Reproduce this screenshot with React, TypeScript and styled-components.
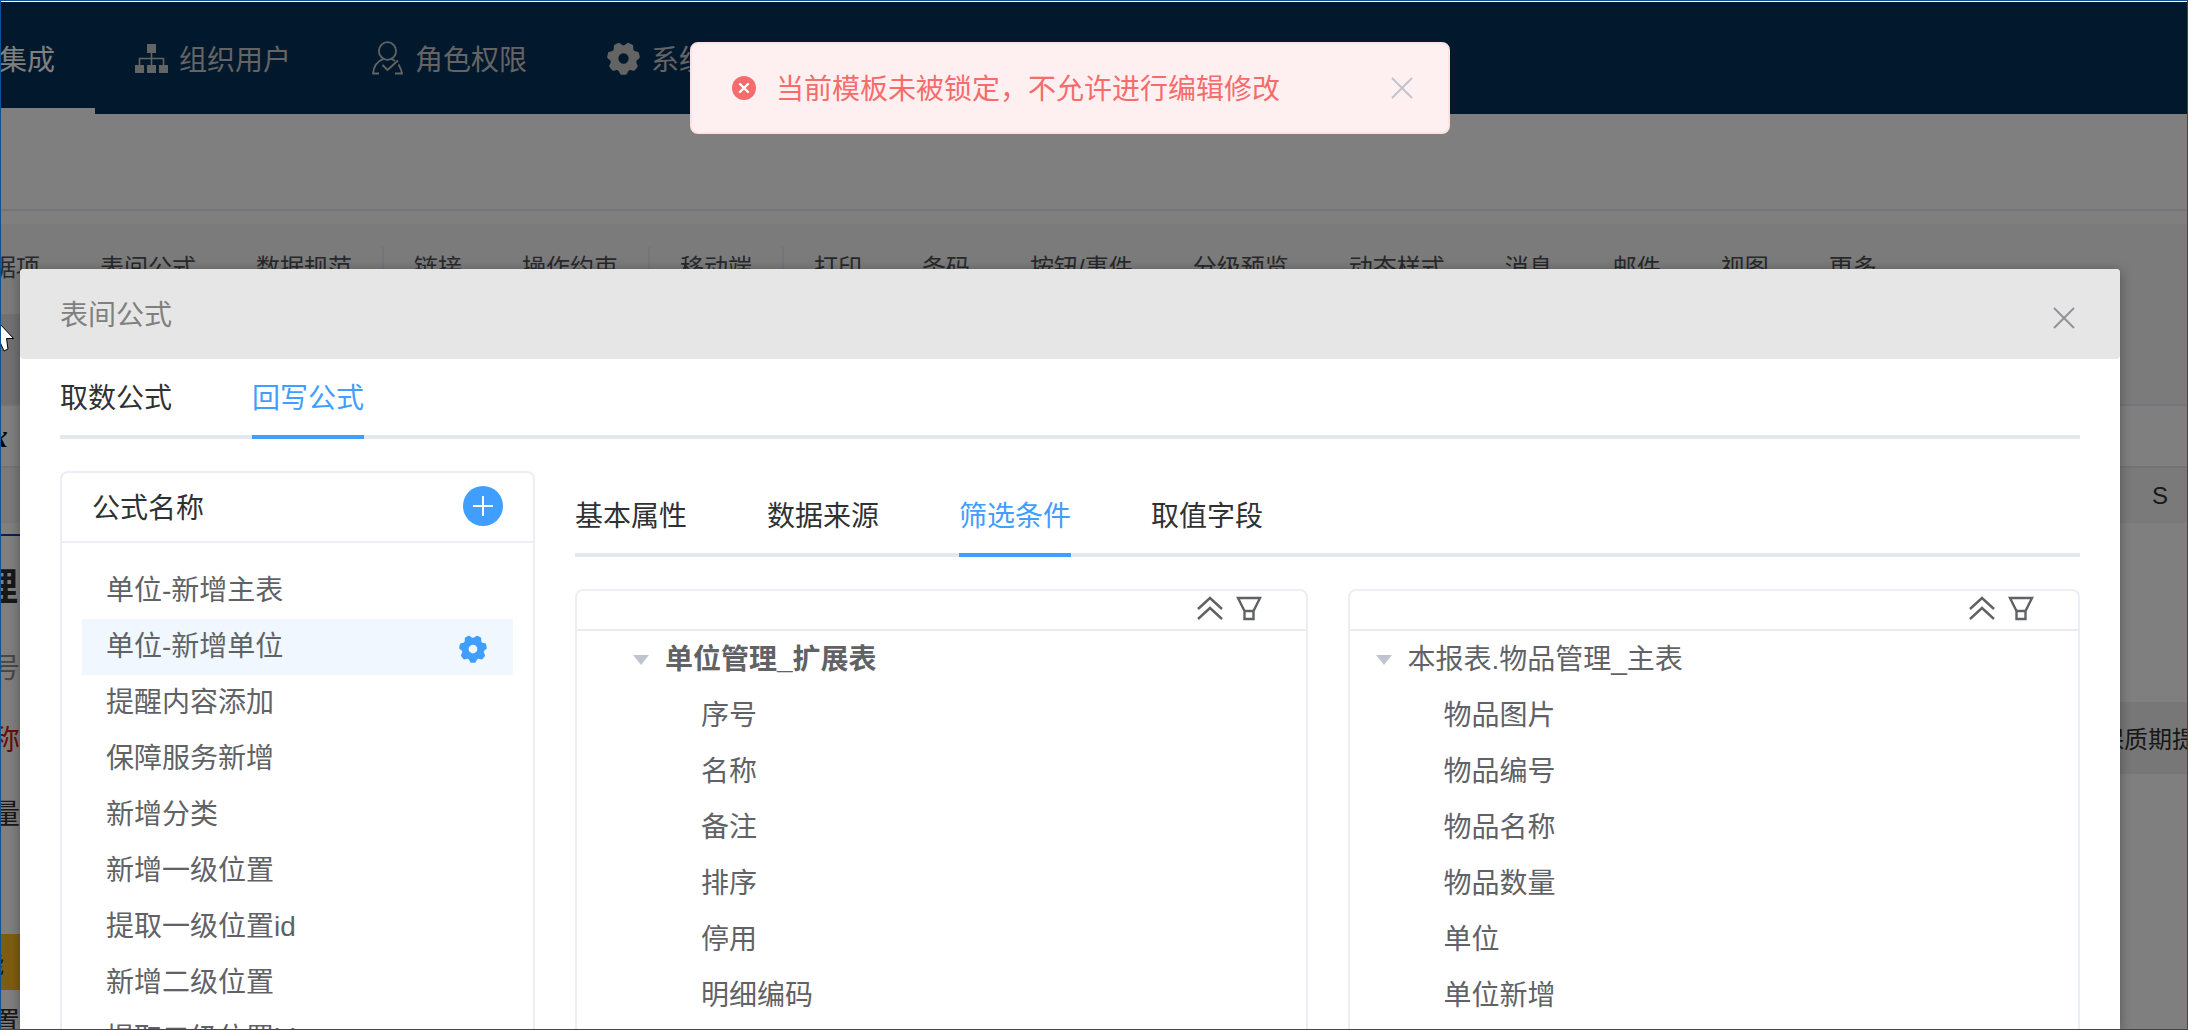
import React, { useState } from "react";
import styled, { createGlobalStyle, css } from "styled-components";

const fontStack = `"Liberation Sans", "Noto Sans CJK SC", sans-serif`;
const blue = "#409eff";
const line = "#ebeef5";

const GlobalStyle = createGlobalStyle`
  * { box-sizing: border-box; }
  body { margin: 0; font-family: ${fontStack}; font-size: 28px; color: #303133; }
  button { font: inherit; color: inherit; background: none; border: 0; padding: 0; cursor: pointer; }
  ul { list-style: none; margin: 0; padding: 0; }
  h2, h3 { margin: 0; font-size: 28px; font-weight: 400; }
  svg { display: block; flex: none; }
`;

const Screen = styled.div`
  position: relative;
  height: 100vh;
  overflow: hidden;
  border: 1px solid #0b5394;
  background: #fff;
`;

/* ---------- page under the dialog ---------- */

const Page = styled.div`
  display: flex;
  flex-direction: column;
`;

const Header = styled.nav`
  display: flex;
  height: 112px;
  margin-top: 1px;
  background: #043058;
`;

const NavItem = styled.button<{ $active?: boolean; $first?: boolean }>`
  display: flex;
  flex: none;
  align-items: center;
  gap: 11px;
  height: 112px;
  padding: 0 40px;
  white-space: nowrap;
  color: #c8c8c8;
  ${(p) =>
    p.$first &&
    css`
      margin-left: -42px;
      color: #fff;
      border-top: 6px solid transparent;
      border-bottom: 6px solid #fff;
    `}
`;

const TitleBar = styled.div`
  height: 97px;
  border-bottom: 2px solid #e8e8f2;
`;

const Toolbar = styled.div`
  display: flex;
  flex-direction: column;
  height: 182px;
  margin-top: 13px;
  background: #f6f6f6;
  border-bottom: 2px solid #e8e8f2;
`;

const ToolList = styled.div`
  display: flex;
  margin: 23px 0 19px -63px;
  font-size: 24px;
`;

const ToolItem = styled.button<{ $divided?: boolean }>`
  flex: none;
  padding: 0 30px;
  height: 48px;
  line-height: 40px;
  padding-bottom: 6px;
  white-space: nowrap;
  color: #505255;
  border-right: ${(p) => (p.$divided ? "2px solid #e8e8f2" : "0")};
`;

const ToolDetail = styled.div`
  width: 160px;
  height: 92px;
  background: #e2e2e9;
`;

const FormulaBar = styled.div`
  height: 62px;
  padding-left: 4px;
  border-bottom: 2px solid #e6e6e6;
  display: flex;
  align-items: center;
`;

const FxMark = styled.span`
  font: italic 700 32px "Liberation Serif", serif;
  color: #111;
  margin-left: -24px;
`;

const Sheet = styled.div`
  display: flex;
  justify-content: space-between;
`;

const SheetEdge = styled.div<{ $width: number }>`
  width: ${(p) => p.$width}px;
  display: flex;
  flex-direction: column;
`;

const SheetCell = styled.div<{ $h: number; $bg?: string; $color?: string; $end?: boolean }>`
  display: flex;
  flex: none;
  align-items: center;
  justify-content: ${(p) => (p.$end ? "flex-end" : "flex-start")};
  height: ${(p) => p.$h}px;
  white-space: nowrap;
  background: ${(p) => p.$bg || "transparent"};
  color: ${(p) => p.$color || "#303133"};
`;

const SheetTitle = styled(SheetCell)`
  margin-top: 11px;
  padding: 0 2px 8px 0;
  border-top: 2px solid #0a4590;
  font-size: 38px;
  font-weight: 700;
`;

const BadgeCell = styled(SheetCell)`
  padding-right: 16px;
  font-size: 24px;
`;

const ColumnLetter = styled(SheetCell)`
  padding-left: 52px;
  font-size: 24px;
`;

const FieldCell = styled(SheetCell)`
  margin-top: 179px;
  padding-bottom: 2px;
  font-size: 24px;
`;

const Mask = styled.div`
  position: absolute;
  inset: 1px 0 0;
  background: rgba(0, 0, 0, 0.5);
`;

const Pointer = styled.svg`
  position: absolute;
  left: 0;
  top: 322px;
`;

/* ---------- message ---------- */

const MessageLayer = styled.div`
  position: absolute;
  inset: 41px 48px auto 0;
  display: flex;
  justify-content: center;
`;

const Message = styled.div`
  display: flex;
  align-items: center;
  width: 760px;
  height: 92px;
  padding: 0 34px 0 40px;
  border: 2px solid #fde2e2;
  border-radius: 8px;
  background: #fef0f0;
  color: #f56c6c;
`;

const MessageText = styled.span`
  flex: 1;
  margin-left: 20px;
  padding-bottom: 2px;
`;

const IconButton = styled.button`
  display: flex;
  color: ${(p) => p.color || "#909399"};
`;

/* ---------- dialog ---------- */

const DialogLayer = styled.div`
  position: absolute;
  inset: 268px 67px 0 19px;
  display: flex;
`;

const Dialog = styled.section`
  display: flex;
  flex: 1;
  flex-direction: column;
  min-width: 0;
  background: #fff;
  border-radius: 4px 4px 0 0;
  box-shadow: 0 2px 12px rgba(0, 0, 0, 0.35);
`;

const DialogHeader = styled.header`
  display: flex;
  align-items: center;
  justify-content: space-between;
  height: 90px;
  padding: 0 44px 0 40px;
  border-radius: 4px;
  background: #e6e6e6;
  color: #808080;

  h2 {
    padding-bottom: 2px;
  }

  button {
    padding-top: 8px;
  }
`;

const DialogBody = styled.div`
  display: flex;
  flex: 1;
  flex-direction: column;
  min-height: 0;
  padding: 0 40px;
`;

const TabBar = styled.div`
  display: flex;
  flex: none;
  gap: 80px;
  height: 80px;
  margin-bottom: 32px;
  box-shadow: inset 0 -4px #e4e7ed;
`;

const Tab = styled.button<{ $active: boolean }>`
  height: 80px;
  padding-top: 4px;
  line-height: 72px;
  border-bottom: 4px solid ${(p) => (p.$active ? blue : "transparent")};
  color: ${(p) => (p.$active ? blue : "#303133")};
`;

const Columns = styled.div`
  display: flex;
  flex: 1;
  gap: 40px;
  min-height: 0;
`;

const Panel = styled.aside`
  flex: 0 0 475px;
  border: 2px solid ${line};
  border-bottom: 0;
  border-radius: 8px 8px 0 0;
  overflow: hidden;
`;

const PanelHeader = styled.div`
  display: flex;
  align-items: center;
  justify-content: space-between;
  height: 70px;
  padding: 0 30px 2px;
  border-bottom: 2px solid ${line};
`;

const AddButton = styled.button`
  display: grid;
  place-items: center;
  width: 40px;
  height: 40px;
  border-radius: 50%;
  background: ${blue};
  color: #fff;
`;

const FormulaList = styled.ul`
  padding: 20px;
`;

const FormulaRow = styled.li<{ $active: boolean }>`
  display: flex;
  align-items: center;
  height: 56px;
  padding: 0 26px 0 24px;
  background: ${(p) => (p.$active ? "#f0f7ff" : "transparent")};
  color: #606266;
`;

const FormulaName = styled.button`
  flex: 1;
  height: 56px;
  line-height: 56px;
  text-align: left;
`;

const SettingsButton = styled(IconButton)`
  padding-top: 4px;
`;

const Main = styled.main`
  display: flex;
  flex: 1;
  flex-direction: column;
  min-width: 0;
  padding-top: 6px;
`;

const Trees = styled.div`
  display: grid;
  flex: 1;
  grid-template-columns: 1fr 1fr;
  gap: 40px;
  min-height: 0;
`;

const TreeCard = styled.div`
  border: 2px solid ${line};
  border-bottom: 0;
  border-radius: 8px 8px 0 0;
  overflow: hidden;
`;

const TreeTools = styled.div`
  display: flex;
  align-items: center;
  justify-content: flex-end;
  gap: 11px;
  height: 40px;
  padding: 0 43px 4px;
  border-bottom: 2px solid #ebebeb;
`;

const TreeList = styled.ul<{ $inset: number }>`
  padding-left: ${(p) => p.$inset}px;
  color: #606266;
`;

const TreeRoot = styled.button<{ $bold?: boolean }>`
  display: flex;
  align-items: center;
  gap: 16px;
  height: 56px;
  padding: 2px 0 0 26px;
  line-height: 54px;
  font-weight: ${(p) => (p.$bold ? 700 : 400)};
`;

const TreeLeaf = styled.li`
  height: 56px;
  padding: 2px 0 0 94px;
  line-height: 54px;
`;

/* ---------- icons ---------- */

const CloseIcon = () => (
  <svg width="24" height="24" viewBox="0 0 24 24" fill="none" stroke="currentColor" strokeWidth="2">
    <path d="M2 2 22 22M22 2 2 22" />
  </svg>
);

const ErrorIcon = () => (
  <svg width="24" height="24" viewBox="0 0 24 24">
    <circle cx="12" cy="12" r="12" fill="#f56c6c" />
    <path d="M8 8 16 16M16 8 8 16" stroke="#fff" strokeWidth="2.4" strokeLinecap="round" />
  </svg>
);

const SitemapIcon = () => (
  <svg width="33" height="33" viewBox="0 0 33 33" fill="currentColor">
    <path d="M12 2h9v9h-9zM0 23h9v8H0zM12 23h9v8h-9zM24 23h9v8h-9z" />
    <path d="M16.5 11v12M4.5 23v-6.500h24V23" fill="none" stroke="currentColor" strokeWidth="1.6" />
  </svg>
);

const RoleIcon = () => (
  <svg width="33" height="34" viewBox="0 0 33 34" fill="none" stroke="currentColor" strokeWidth="1.8">
    <ellipse cx="16.500" cy="10" rx="8.600" ry="8.800" />
    <path d="M12.500 17.800C6.500 20 2.600 25.500 2 32.500h6M20.500 17.800l3.500 2.200M27.500 23.500c1.500 2.500 3 5.500 3.500 9h-7" />
    <path d="M11.500 24l5 5L27 19.500" />
  </svg>
);

const gearShape = (() => {
  const teeth = 7;
  const pts: string[] = [];
  for (let i = 0; i < teeth * 20; i++) {
    const a = (i / (teeth * 20)) * Math.PI * 2 + Math.PI / 2;
    const wave = Math.max(-1, Math.min(1, 1.6 * Math.cos(teeth * (a - Math.PI / 2)) + 0.5));
    const r = 14.3 + 1.5 * wave;
    pts.push(`${(16 + r * Math.cos(a)).toFixed(2)} ${(16 + r * Math.sin(a)).toFixed(2)}`);
  }
  return `M${pts.join("L")}Z M16 11a5 5 0 1 0 0 10a5 5 0 1 0 0-10Z`;
})();

const GearIcon = ({ size }: { size: number }) => (
  <svg width={size} height={size} viewBox="0 0 32 32" fill="currentColor" fillRule="evenodd">
    <path d={gearShape} />
  </svg>
);

const PlusIcon = () => (
  <svg width="20" height="20" viewBox="0 0 20 20" stroke="currentColor" strokeWidth="2">
    <path d="M10 0v20M0 10h20" />
  </svg>
);

const CollapseIcon = () => (
  <svg width="28" height="28" viewBox="0 0 28 28" fill="none" stroke="currentColor" strokeWidth="2.400">
    <path d="M2 15 14 4l12 11M2 25 14 14l12 11" />
  </svg>
);

const FilterIcon = () => (
  <svg width="28" height="28" viewBox="0 0 28 28" fill="none" stroke="currentColor" strokeWidth="2.400">
    <path d="M3 4h22l-6.500 13H9.500zM9.500 17v8h9v-8" />
  </svg>
);

const CaretIcon = () => (
  <svg width="16" height="10" viewBox="0 0 16 10" fill="#c0c4cc">
    <path d="M0 0h16L8 10z" />
  </svg>
);

/* ---------- data ---------- */

const tools = [
  { name: "数据项" },
  { name: "表间公式" },
  { name: "数据规范", divided: true },
  { name: "链接" },
  { name: "操作约束", divided: true },
  { name: "移动端", divided: true },
  { name: "打印" },
  { name: "条码" },
  { name: "按钮/事件" },
  { name: "分级预览" },
  { name: "动态样式" },
  { name: "消息" },
  { name: "邮件" },
  { name: "视图" },
  { name: "更多" },
];

const formulas = [
  "单位-新增主表",
  "单位-新增单位",
  "提醒内容添加",
  "保障服务新增",
  "新增分类",
  "新增一级位置",
  "提取一级位置id",
  "新增二级位置",
  "提取二级位置id",
];

const sourceFields = ["序号", "名称", "备注", "排序", "停用", "明细编码"];
const reportFields = ["物品图片", "物品编号", "物品名称", "物品数量", "单位", "单位新增"];

function Tabs({ items, initial }: { items: string[]; initial: string }) {
  const [active, setActive] = useState(initial);
  return (
    <TabBar role="tablist">
      {items.map((t) => (
        <Tab key={t} role="tab" aria-selected={t === active} $active={t === active} onClick={() => setActive(t)}>
          {t}
        </Tab>
      ))}
    </TabBar>
  );
}

function Tree(props: { root: string; fields: string[]; bold?: boolean; inset: number }) {
  return (
    <TreeCard>
      <TreeTools>
        <IconButton color="#606266" aria-label="收起">
          <CollapseIcon />
        </IconButton>
        <IconButton color="#606266" aria-label="筛选">
          <FilterIcon />
        </IconButton>
      </TreeTools>
      <TreeList $inset={props.inset}>
        <li>
          <TreeRoot $bold={props.bold}>
            <CaretIcon />
            {props.root}
          </TreeRoot>
        </li>
        {props.fields.map((f) => (
          <TreeLeaf key={f}>{f}</TreeLeaf>
        ))}
      </TreeList>
    </TreeCard>
  );
}

export default function App() {
  const [current, setCurrent] = useState("单位-新增单位");
  return (
    <Screen>
      <GlobalStyle />
      <Page>
        <Header>
          <NavItem $first>集成</NavItem>
          <NavItem>
            <SitemapIcon />
            组织用户
          </NavItem>
          <NavItem>
            <RoleIcon />
            角色权限
          </NavItem>
          <NavItem>
            <GearIcon size={33} />
            系统
          </NavItem>
        </Header>
        <TitleBar />
        <Toolbar>
          <ToolList>
            {tools.map((t) => (
              <ToolItem key={t.name} $divided={t.divided}>
                {t.name}
              </ToolItem>
            ))}
          </ToolList>
          <ToolDetail />
        </Toolbar>
        <FormulaBar>
          <FxMark>fx</FxMark>
        </FormulaBar>
        <Sheet>
          <SheetEdge $width={19}>
            <SheetCell $h={55} $bg="#f4f4f4" />
            <SheetTitle $h={104} $end>
              理
            </SheetTitle>
            <SheetCell $h={56} $end $color="#909090">
              号
            </SheetCell>
            <SheetCell $h={88} $end $color="#d02010">
              称
            </SheetCell>
            <SheetCell $h={60} $end>
              量
            </SheetCell>
            <SheetCell $h={92} />
            <BadgeCell $h={56} $end $bg="#ffba20">
              能
            </BadgeCell>
            <SheetCell $h={60} $end>
              置
            </SheetCell>
          </SheetEdge>
          <SheetEdge $width={87}>
            <ColumnLetter $h={55} $bg="#f4f4f4">
              S
            </ColumnLetter>
            <FieldCell $h={72} $bg="#efefef">
              保质期提
            </FieldCell>
          </SheetEdge>
        </Sheet>
      </Page>
      <Mask />
      <Pointer width="16" height="32" viewBox="0 0 16 32" aria-hidden="true">
        <path d="M-1 1 12.500 15.500H5.500L7 26 3 28-1 19z" fill="#fff" stroke="#000" />
      </Pointer>

      <DialogLayer>
        <Dialog role="dialog" aria-labelledby="dialog-title">
          <DialogHeader>
            <h2 id="dialog-title">表间公式</h2>
            <IconButton aria-label="关闭">
              <CloseIcon />
            </IconButton>
          </DialogHeader>
          <DialogBody>
            <Tabs items={["取数公式", "回写公式"]} initial="回写公式" />
            <Columns>
              <Panel>
                <PanelHeader>
                  <h3>公式名称</h3>
                  <AddButton aria-label="新增公式">
                    <PlusIcon />
                  </AddButton>
                </PanelHeader>
                <FormulaList>
                  {formulas.map((f) => (
                    <FormulaRow key={f} $active={f === current}>
                      <FormulaName onClick={() => setCurrent(f)}>{f}</FormulaName>
                      {f === current && (
                        <SettingsButton color={blue} aria-label="设置">
                          <GearIcon size={28} />
                        </SettingsButton>
                      )}
                    </FormulaRow>
                  ))}
                </FormulaList>
              </Panel>
              <Main>
                <Tabs items={["基本属性", "数据来源", "筛选条件", "取值字段"]} initial="筛选条件" />
                <Trees>
                  <Tree root="单位管理_扩展表" fields={sourceFields} bold inset={30} />
                  <Tree root="本报表.物品管理_主表" fields={reportFields} inset={0} />
                </Trees>
              </Main>
            </Columns>
          </DialogBody>
        </Dialog>
      </DialogLayer>

      <MessageLayer>
        <Message role="alert">
          <ErrorIcon />
          <MessageText>当前模板未被锁定，不允许进行编辑修改</MessageText>
          <IconButton color="#c0c4cc" aria-label="关闭提示">
            <CloseIcon />
          </IconButton>
        </Message>
      </MessageLayer>
    </Screen>
  );
}
